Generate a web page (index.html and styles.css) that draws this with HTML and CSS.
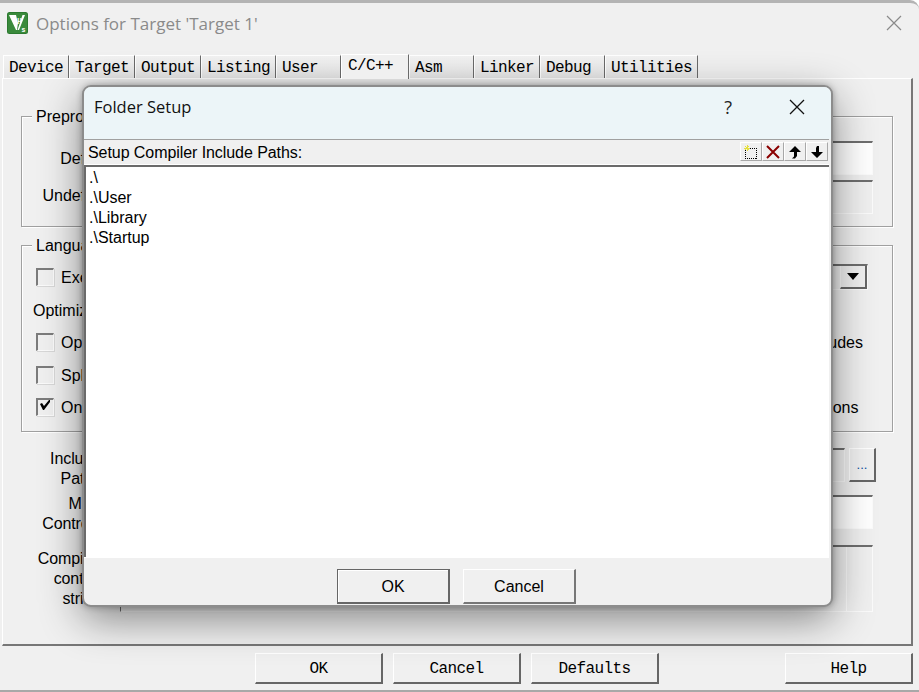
FILE: index.html
```html
<!DOCTYPE html>
<html lang="en">
<head>
<meta charset="utf-8">
<title>Options for Target</title>
<link rel="stylesheet" href="styles.css">
</head>
<body>
<div class="window">
  <header class="titlebar">
    <svg class="app-icon" width="21" height="22" viewBox="0 0 21 22">
      <rect x="0" y="0" width="21" height="22" rx="2.5" fill="#2c7a30"/>
      <rect x="1" y="1" width="19" height="20" rx="1.5" fill="#3a8a3c"/>
      <path d="M2 3h7l2 8-1 7h-1zM10.500 18l5-15h2.500l-6 15z" fill="#fff"/>
      <text x="10" y="10" class="icon-mu">μ</text>
      <text x="14.500" y="19.500" class="icon-five">s</text>
    </svg>
    <span class="window-title">Options for Target 'Target 1'</span>
    <svg class="window-close" width="18" height="18" viewBox="0 0 18 18"><path d="M2 2l14 14M16 2L2 16" stroke="#8a8a8a" stroke-width="1.2" fill="none"/></svg>
  </header>

  <nav class="tabs">
    <span class="tab">Device</span>
    <span class="tab">Target</span>
    <span class="tab">Output</span>
    <span class="tab">Listing</span>
    <span class="tab">User</span>
    <span class="tab tab-active">C/C++</span>
    <span class="tab">Asm</span>
    <span class="tab">Linker</span>
    <span class="tab">Debug</span>
    <span class="tab">Utilities</span>
  </nav>

  <main class="panel">
    <section class="group group-pre">
      <span class="legend">Preprocessor Symbols</span>
      <div class="sym-row"><label class="sym-label label-def">Define:</label><div class="field field-white"></div></div>
      <div class="sym-row"><label class="sym-label label-undef">Undefine:</label><div class="field"></div></div>
    </section>

    <section class="group group-lang">
      <span class="legend">Language / Code Generation</span>
      <div class="lang-grid">
        <div class="lang-col">
          <div class="check-row"><span class="check"></span>Execute-only Code</div>
          <div class="check-row opt-label">Optimization: Level 0</div>
          <div class="check-row"><span class="check"></span>Optimize for Time</div>
          <div class="check-row"><span class="check"></span>Split Load and Store Multiple</div>
          <div class="check-row"><span class="check check-on"><svg width="12" height="12" viewBox="0 0 12 12"><path d="M1 4l2-1 2 3 5-6h1v2L5 10H4z" fill="#000"/></svg></span>One ELF Section per Function</div>
        </div>
        <div class="lang-col lang-right">
          <div class="check-row"><div class="combo"><span class="combo-btn"><svg width="12" height="7" viewBox="0 0 12 7"><path d="M0 0h12L6 7z" fill="#000"/></svg></span></div></div>
          <div class="check-row"></div>
          <div class="check-row"><span class="check"></span>No Auto Includes</div>
          <div class="check-row"><span class="check"></span>C99 Mode</div>
          <div class="check-row"><span class="check"></span>GNU extensions</div>
        </div>
      </div>
    </section>

    <div class="path-row path-include">
      <label class="path-label label-inc">Include<br>Paths</label>
      <div class="field"></div>
      <span class="dots-btn">...</span>
    </div>
    <div class="path-row path-misc">
      <label class="path-label label-misc">Misc<br>Controls</label>
      <div class="field field-white field-inset"></div>
    </div>
    <div class="path-row path-comp">
      <label class="path-label label-comp">Compiler<br>control<br>string</label>
      <div class="field field-tall field-inset"><span class="field-scroll"></span></div>
    </div>
  </main>

  <footer class="footer">
    <button class="win-btn">OK</button>
    <button class="win-btn">Cancel</button>
    <button class="win-btn">Defaults</button>
    <button class="win-btn btn-help">Help</button>
  </footer>

  <div class="dialog">
    <header class="dialog-title">
      <span class="dialog-name">Folder Setup</span>
      <span class="dialog-help">?</span>
      <svg class="dialog-close" width="16" height="16" viewBox="0 0 16 16"><path d="M1 1l14 14M15 1L1 15" stroke="#111" stroke-width="1.3" fill="none"/></svg>
    </header>
    <div class="dialog-body">
      <div class="list-head">
        <span class="list-caption">Setup Compiler Include Paths:</span>
        <div class="toolbar">
          <span class="tool">
            <svg width="16" height="16" viewBox="0 0 16 16" shape-rendering="crispEdges"><rect x="2.500" y="4.500" width="11" height="10" fill="none" stroke="#000" stroke-dasharray="1 1"/><path d="M4 1v6M1 4h6M2 2l4 4M6 2L2 6" stroke="#e6e03c" stroke-width="1"/></svg>
          </span>
          <span class="tool">
            <svg width="16" height="16" viewBox="0 0 16 16"><path d="M2 2l12 12M14 2L2 14" stroke="#8b0000" stroke-width="2" fill="none"/></svg>
          </span>
          <span class="tool">
            <svg width="14" height="14" viewBox="0 0 14 14"><path d="M7 1l6 6H9v4l-2 2.500H4l2-2V7H1z" fill="#000"/></svg>
          </span>
          <span class="tool">
            <svg width="14" height="14" viewBox="0 0 14 14"><path d="M7 13l6-6H9V1H7L6 3v4H1z" fill="#000"/></svg>
          </span>
        </div>
      </div>
      <ul class="path-list">
        <li>.\</li>
        <li>.\User</li>
        <li>.\Library</li>
        <li>.\Startup</li>
      </ul>
      <div class="dialog-actions">
        <button class="dlg-btn dlg-default">OK</button>
        <button class="dlg-btn">Cancel</button>
      </div>
    </div>
  </div>
</div>
</body>
</html>
```
FILE: styles.css
```css
* { box-sizing: border-box; }
html, body { margin: 0; padding: 0; }
body { width: 919px; height: 692px; overflow: hidden; background: #fff; font-family: "Liberation Sans", Arial, sans-serif; font-size: 16px; color: #000; }

.window { position: relative; width: 919px; height: 692px; overflow: hidden; display: flex; flex-direction: column; background: #f0f0f0; border-top: 3px solid #b4b4b4; border-bottom: 2px solid #a8a8a8; border-top-right-radius: 9px; }

.titlebar { flex: none; height: 50px; display: flex; align-items: center; padding: 0 16px 10px 7px; }
.app-icon { flex: none; }
.icon-mu { font: bold 8px "Liberation Sans", sans-serif; fill: #fff; }
.icon-five { font: bold 7px "Liberation Sans", sans-serif; fill: #fff; }
.window-title { margin-left: 8px; font-family: "Open Sans", sans-serif; font-size: 17px; color: #8a8a8a; }
.window-close { margin-left: auto; }

.tabs { flex: none; height: 25px; display: flex; align-items: flex-end; padding-left: 3px; font-family: "Liberation Mono", monospace; font-size: 16px; letter-spacing: -.6px; }
.tab { height: 23px; min-width: 65px; padding: 3px 5px 0 5px; border-top: 1px solid #fff; border-left: 1px solid #fff; border-right: 1px solid #6a6a6a; white-space: nowrap; line-height: 18px; background: linear-gradient(#f2f2f2, #e6e6e6); }
.tab-active { height: 25px; min-width: 68px; padding: 2px 5px 0 6px; background: #f0f0f0; position: relative; z-index: 1; margin-bottom: -1px; }

.panel { flex: none; height: 568px; margin-left: 2px; width: 911px; padding: 37px 18px 0; border-top: 1px solid #fff; border-left: 1px solid #fff; border-right: 2px solid #777; border-bottom: 2px solid #777; }

.group { border: 1px solid #a0a0a0; box-shadow: 1px 1px 0 #fff, inset 1px 1px 0 #fff; }
.legend { display: block; width: fit-content; height: 20px; line-height: 20px; margin: -10px 0 0 10px; padding: 0 4px; background: #f0f0f0; white-space: nowrap; }
.group-pre { height: 111px; padding: 0 19px 0 0; }
.sym-row { display: grid; grid-template-columns: 89px 1fr; column-gap: 9px; align-items: center; height: 34px; margin-bottom: 5px; }
.legend + .sym-row { margin-top: 14px; }
.sym-label { text-align: right; white-space: nowrap; }
.label-def { padding-top: 2px; }
.label-undef { margin-top: -2px; }

.field { height: 34px; border-top: 2px solid #6e6e6e; border-left: 1px solid #6e6e6e; border-right: 1px solid #fbfbfb; border-bottom: 1px solid #fbfbfb; background: #f0f0f0; }
.field-white { background: #fff; }
.field-tall { height: 67px; display: flex; justify-content: flex-end; }
.field-inset { margin-right: 3px; }
.field-scroll { width: 26px; border-left: 1px solid #fbfbfb; }

.group-lang { height: 187px; margin-top: 18px; padding: 0 24px 0 0; }
.lang-grid { display: flex; justify-content: space-between; margin-top: 5px; padding-left: 14px; }
.lang-col { display: grid; grid-template-rows: repeat(5, 32.5px); }
.lang-right { width: 151px; }
.check-row { display: flex; align-items: center; gap: 7px; white-space: nowrap; height: 32.5px; padding-top: 2px; }
.opt-label { margin-left: -3px; }
.check { flex: none; width: 18px; height: 18px; margin-top: -2px; display: flex; align-items: center; justify-content: center; background: #f0f0f0; border-top: 2px solid #7c7c7c; border-left: 2px solid #7c7c7c; border-right: 1px solid #fbfbfb; border-bottom: 1px solid #fbfbfb; box-shadow: 1px 1px 0 #d8d8d8; }
.check-on svg { margin: -3px 0 0 -2px; }
.combo { flex: 1; height: 26px; margin-top: -2px; display: flex; justify-content: flex-end; background: #f0f0f0; border: 1px solid #fbfbfb; border-top: 2px solid #6e6e6e; }
.combo-btn { width: 27px; height: 100%; display: flex; align-items: center; justify-content: center; background: #f0f0f0; border-left: 1px solid #fbfbfb; border-right: 2px solid #666; border-bottom: 2px solid #666; }

.path-row { display: grid; column-gap: 19px; padding-right: 17px; align-items: start; }
.path-include { margin-top: 16px; column-gap: 0; grid-template-columns: 80px 1fr 27px; height: 34px; }
.path-include .field { margin-left: 19px; margin-right: 4px; }
.path-misc, .path-comp { grid-template-columns: 80px 1fr; }
.path-misc { margin-top: 13px; height: 34px; }
.path-comp { margin-top: 16px; height: 67px; }
.path-label { line-height: 20px; text-align: right; letter-spacing: -.1px; }
.label-inc { margin-top: 1px; }
.label-misc { margin-top: -1px; }
.label-comp { margin-top: 4px; }
.dots-btn { height: 34px; border: 1px solid #fff; border-right: 2px solid #666; border-bottom: 2px solid #666; text-align: center; font-size: 13px; line-height: 32px; color: #0a4fa0; }

.footer { flex: 1; display: flex; gap: 10px; align-items: flex-start; padding: 7px 6px 0 255px; }
.win-btn { width: 128px; height: 31px; padding: 2px 0 0; font-family: "Liberation Mono", monospace; font-size: 16px; letter-spacing: -.6px; color: #000; background: #f0f0f0; border-style: solid; border-width: 1px 2px 2px 1px; border-color: #fff #666 #666 #fff; }
.btn-help { margin-left: auto; }

.dialog { position: absolute; left: 82px; top: 82px; width: 751px; height: 522px; display: flex; flex-direction: column; background: #f0f0f0; border-radius: 9px; border: 2px solid #8c8c8c; box-shadow: 0 0 6px rgba(0, 0, 0, .3), 0 12px 42px rgba(0, 0, 0, .45); }
.dialog-title { flex: none; height: 52px; display: flex; align-items: center; padding: 0 26px 13px 10px; background: #ecf5f8; border-radius: 7px 7px 0 0; }
.dialog-name { font-family: "Open Sans", sans-serif; font-size: 16.5px; color: #111; }
.dialog-help { margin-left: auto; margin-right: 57px; font-family: "Open Sans", sans-serif; font-size: 18px; color: #222; }
.dialog-body { flex: 1; display: flex; flex-direction: column; padding: 0 2px 0 0; border-radius: 0 0 7px 7px; }
.list-head { flex: none; height: 26px; display: flex; align-items: center; justify-content: space-between; border-top: 1px solid #a0a0a0; border-bottom: 1px solid #fff; padding: 0 1px 0 4px; }
.list-caption { white-space: nowrap; margin-top: 1px; letter-spacing: -.07px; }
.toolbar { display: flex; margin-top: -1px; }
.tool { width: 22px; height: 19px; display: flex; align-items: center; justify-content: center; border-right: 1px solid #a8a8a8; border-bottom: 1px solid #a8a8a8; border-left: 1px solid #fff; border-top: 1px solid #fff; }
.path-list { flex: none; height: 392px; margin: 0; padding: 1px 0 0 3px; list-style: none; background: #fff; border-top: 2px solid #6b6b6b; border-left: 2px solid #6b6b6b; line-height: 20px; }
.dialog-actions { flex: 1; display: flex; justify-content: center; gap: 13px; padding-top: 11px; border-top: 1px solid #fff; }
.dlg-btn { width: 113px; height: 35px; padding: 2px 0 0; font: 16px "Liberation Sans", Arial, sans-serif; color: #000; background: #f0f0f0; border-style: solid; border-width: 1px 2px 2px 1px; border-color: #fff #777 #777 #fff; }
.dlg-default { border-color: #666; box-shadow: inset 1px 1px 0 #fff; }
```
